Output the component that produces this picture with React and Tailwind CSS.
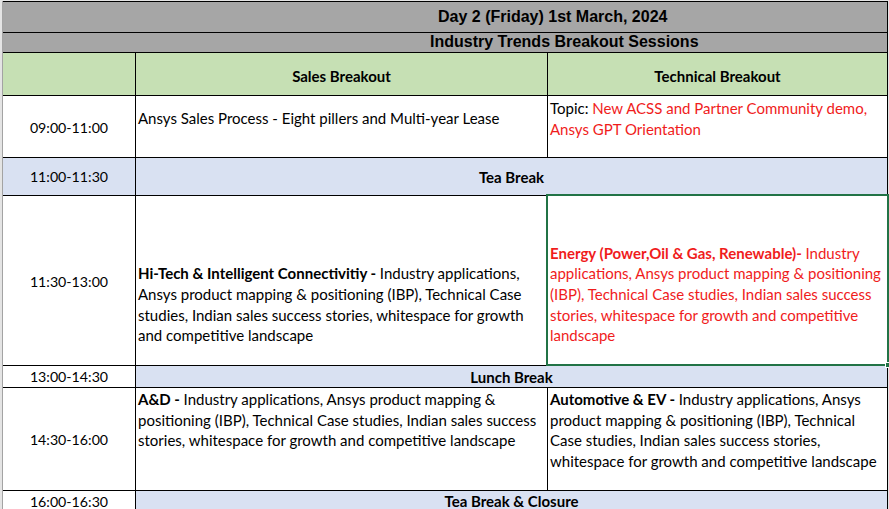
import React from "react";

const body = "font-['Lato',sans-serif] text-[15px] leading-[20.67px] text-black";
const arial = "font-['Liberation_Sans',Arial,sans-serif] font-bold text-[16px] text-black";

function Lines({ lines, className = "" }) {
  return (
    <div className={className}>
      {lines.map((l, i) => (
        <div key={i} className="whitespace-nowrap">
          {l}
        </div>
      ))}
    </div>
  );
}

function Time({ children, bg = "bg-white", className = "" }) {
  return (
    <div className={`${bg} flex items-center justify-center text-[14.2px] ${className}`}>
      <span className="whitespace-nowrap">{children}</span>
    </div>
  );
}

export default function App() {
  const red = "text-[#f01c1c]";
  return (
    <div className="w-[889px] h-[509px] bg-[#e4e4e4] overflow-hidden pt-px pl-[2px]">
      <div
        className={`${body} w-[886px] bg-black border-l border-[#a3a3a3] pt-px pr-px grid gap-px grid-cols-[132px_411px_339px] grid-rows-[30px_19px_42px_61px_37px_169px_21px_102px_18px]`}
      >
        {/* Row 1 */}
        <div className={`col-span-3 bg-[#a6a6a6] flex items-center pl-[435px] ${arial}`}>
          <span className="whitespace-nowrap">Day 2 (Friday) 1st March, 2024</span>
        </div>
        {/* Row 2 */}
        <div className={`col-span-3 bg-[#a6a6a6] flex items-center pl-[427px] ${arial}`}>
          <span className="whitespace-nowrap">Industry Trends Breakout Sessions</span>
        </div>
        {/* Row 3 */}
        <div className="bg-[#c6e0b4]" />
        <div className="bg-[#c6e0b4] flex items-center justify-center pt-[5px] font-bold">
          Sales Breakout
        </div>
        <div className="bg-[#c6e0b4] flex items-center justify-center pt-[5px] font-bold">
          Technical Breakout
        </div>
        {/* Row 4 */}
        <Time className="pt-[3px]">09:00-11:00</Time>
        <div className="bg-white pl-[2px] pt-[12px]">
          <div className="whitespace-nowrap">Ansys Sales Process - Eight pillers and Multi-year Lease</div>
        </div>
        <div className="bg-white pl-[2px] pt-[2px]">
          <Lines
            lines={[
              <>
                Topic: <span className={red}>New ACSS and Partner Community demo,</span>
              </>,
              <span className={red}>Ansys GPT Orientation</span>,
            ]}
          />
        </div>
        {/* Row 5 */}
        <Time bg="bg-[#d9e1f2]" className="pt-[2px]">11:00-11:30</Time>
        <div className="col-span-2 bg-[#d9e1f2] flex items-center justify-center pt-[2px] font-bold">
          Tea Break
        </div>
        {/* Row 6 */}
        <Time className="pt-[3px]">11:30-13:00</Time>
        <div className="bg-white pl-[2px] flex items-end pb-[19px]">
          <Lines
            lines={[
              <>
                <span className="font-bold">Hi-Tech &amp; Intelligent Connectivitiy - </span>Industry applications,
              </>,
              "Ansys product mapping & positioning (IBP), Technical Case",
              "studies, Indian sales success stories, whitespace for growth",
              "and competitive landscape",
            ]}
          />
        </div>
        <div className={`relative bg-white pl-[2px] flex items-end pb-[19px] ${red}`}>
          <Lines
            lines={[
              <>
                <span className="font-bold">Energy (Power,Oil &amp; Gas, Renewable)- </span>Industry
              </>,
              "applications, Ansys product mapping & positioning",
              "(IBP), Technical Case studies, Indian sales success",
              "stories, whitespace for growth and competitive",
              "landscape",
            ]}
          />
          <div className="absolute left-[-2px] top-[-2px] right-[-2px] bottom-[-1px] border-2 border-[#217346] pointer-events-none">
            <div className="absolute right-[-4px] bottom-[-4px] w-[6px] h-[6px] bg-[#217346] border border-white" />
          </div>
        </div>
        {/* Row 7 */}
        <Time className="pt-[2px]">13:00-14:30</Time>
        <div className="col-span-2 bg-[#d9e1f2] flex items-center justify-center pt-[2px] font-bold">
          Lunch Break
        </div>
        {/* Row 8 */}
        <Time className="pt-[3px]">14:30-16:00</Time>
        <div className="bg-white pl-[2px] pt-[1px]">
          <Lines
            lines={[
              <>
                <span className="font-bold">A&amp;D - </span>Industry applications, Ansys product mapping &amp;
              </>,
              "positioning (IBP), Technical Case studies, Indian sales success",
              "stories, whitespace for growth and competitive landscape",
            ]}
          />
        </div>
        <div className="bg-white pl-[2px] pt-[1px]">
          <Lines
            lines={[
              <>
                <span className="font-bold">Automotive &amp; EV - </span>Industry applications, Ansys
              </>,
              "product mapping & positioning (IBP), Technical",
              "Case studies, Indian sales success stories,",
              "whitespace for growth and competitive landscape",
            ]}
          />
        </div>
        {/* Row 9 */}
        <Time className="items-end leading-[14px]">16:00-16:30</Time>
        <div className="col-span-2 bg-[#d9e1f2] flex items-end justify-center leading-[14px] pb-px font-bold">
          Tea Break &amp; Closure
        </div>
      </div>
    </div>
  );
}
